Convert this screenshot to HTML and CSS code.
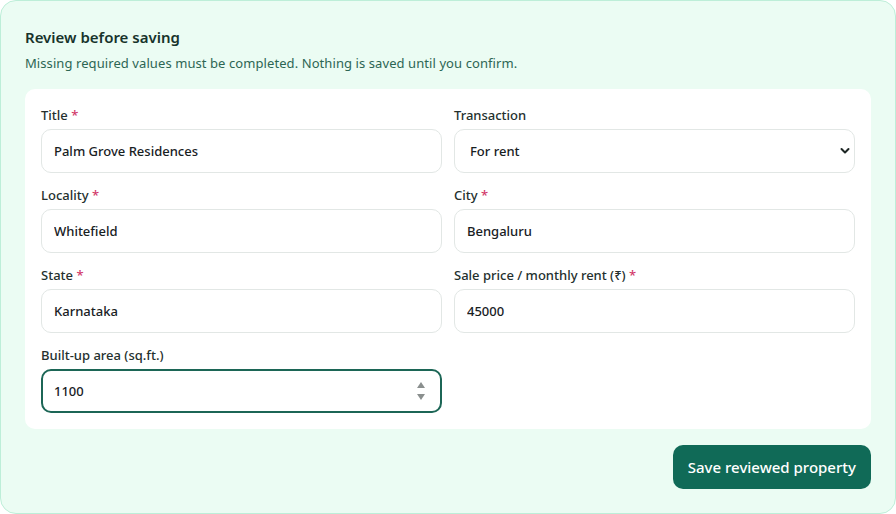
FILE: index.html
```html
<!DOCTYPE html>
<html lang="en">
<head>
<meta charset="utf-8">
<title>Review before saving</title>
<link rel="stylesheet" href="styles.css">
</head>
<body>
<section class="panel">
  <h2 class="panel-title">Review before saving</h2>
  <p class="panel-sub">Missing required values must be completed. Nothing is saved until you confirm.</p>
  <div class="card">
    <div class="grid">
      <label class="field">
        <span class="label">Title <span class="req">*</span></span>
        <input class="input" type="text" value="Palm Grove Residences">
      </label>
      <label class="field">
        <span class="label">Transaction</span>
        <span class="select-wrap">
          <select class="input select"><option>For rent</option><option>For sale</option></select>
          <svg class="chev" width="10" height="8" viewBox="0 0 10 8"><path d="M1.5 2 L5 5.5 L8.5 2" fill="none" stroke="#1d2624" stroke-width="2" stroke-linecap="round" stroke-linejoin="round"/></svg>
        </span>
      </label>
      <label class="field">
        <span class="label">Locality <span class="req">*</span></span>
        <input class="input" type="text" value="Whitefield">
      </label>
      <label class="field">
        <span class="label">City <span class="req">*</span></span>
        <input class="input" type="text" value="Bengaluru">
      </label>
      <label class="field">
        <span class="label">State <span class="req">*</span></span>
        <input class="input" type="text" value="Karnataka">
      </label>
      <label class="field">
        <span class="label">Sale price / monthly rent (₹) <span class="req">*</span></span>
        <input class="input" type="text" value="45000">
      </label>
      <label class="field">
        <span class="label">Built-up area (sq.ft.)</span>
        <span class="select-wrap">
          <input class="input focused" type="text" value="1100">
          <svg class="spin" width="10" height="22" viewBox="0 0 10 22"><path d="M5 2 L9 8 L1 8 Z" fill="#8a8f8e"/><path d="M1 14 L9 14 L5 20 Z" fill="#8a8f8e"/></svg>
        </span>
      </label>
    </div>
  </div>
  <div class="actions">
    <button class="btn" type="button">Save reviewed property</button>
  </div>
</section>
</body>
</html>
```
FILE: styles.css
```css
* { box-sizing: border-box; }
html, body { margin: 0; padding: 0; background: #ffffff; }
body { font-family: "Noto Sans", "Open Sans", sans-serif; }
.panel {
  width: 896px;
  height: 514px;
  background: #ebfcf3;
  border: 1px solid #bdeed8;
  border-radius: 16px;
  padding: 25px 24px 24px 24px;
}
.panel-title {
  margin: 0;
  font-size: 15px;
  line-height: 22px;
  font-weight: 600;
  color: #17332b;
}
.panel-sub {
  margin: 5px 0 0 0;
  font-size: 13px;
  line-height: 20px;
  color: #2d6653;
  letter-spacing: 0.08px;
}
.card {
  margin-top: 16px;
  background: #ffffff;
  border-radius: 10px;
  padding: 16px;
}
.grid {
  display: grid;
  grid-template-columns: 1fr 1fr;
  column-gap: 12px;
  row-gap: 12px;
}
.field { display: flex; flex-direction: column; gap: 4px; }
.label {
  font-size: 13px;
  line-height: 20px;
  font-weight: 500;
  color: #24302e;
}
.req { color: #d23a6a; }
.select-wrap { position: relative; display: block; }
.input {
  width: 100%;
  height: 44px;
  border: 1px solid #e2e7e5;
  border-radius: 10px;
  padding: 0 12px;
  font-family: inherit;
  font-size: 13px;
  font-weight: 500;
  color: #18211f;
  background: #ffffff;
  outline: none;
}
.select {
  appearance: none;
  -webkit-appearance: none;
  padding-left: 15px;
}
.chev { position: absolute; right: 5px; top: 18px; }
.focused { border: 2px solid #1c6656; padding-left: 11px; }
.spin { position: absolute; right: 16px; top: 11px; }
.actions { display: flex; justify-content: flex-end; margin-top: 16px; }
.btn {
  height: 44px;
  padding: 0 15px;
  border: none;
  border-radius: 10px;
  background: #106a57;
  color: #ffffff;
  font-family: inherit;
  font-size: 15px;
  font-weight: 500;
}
```
